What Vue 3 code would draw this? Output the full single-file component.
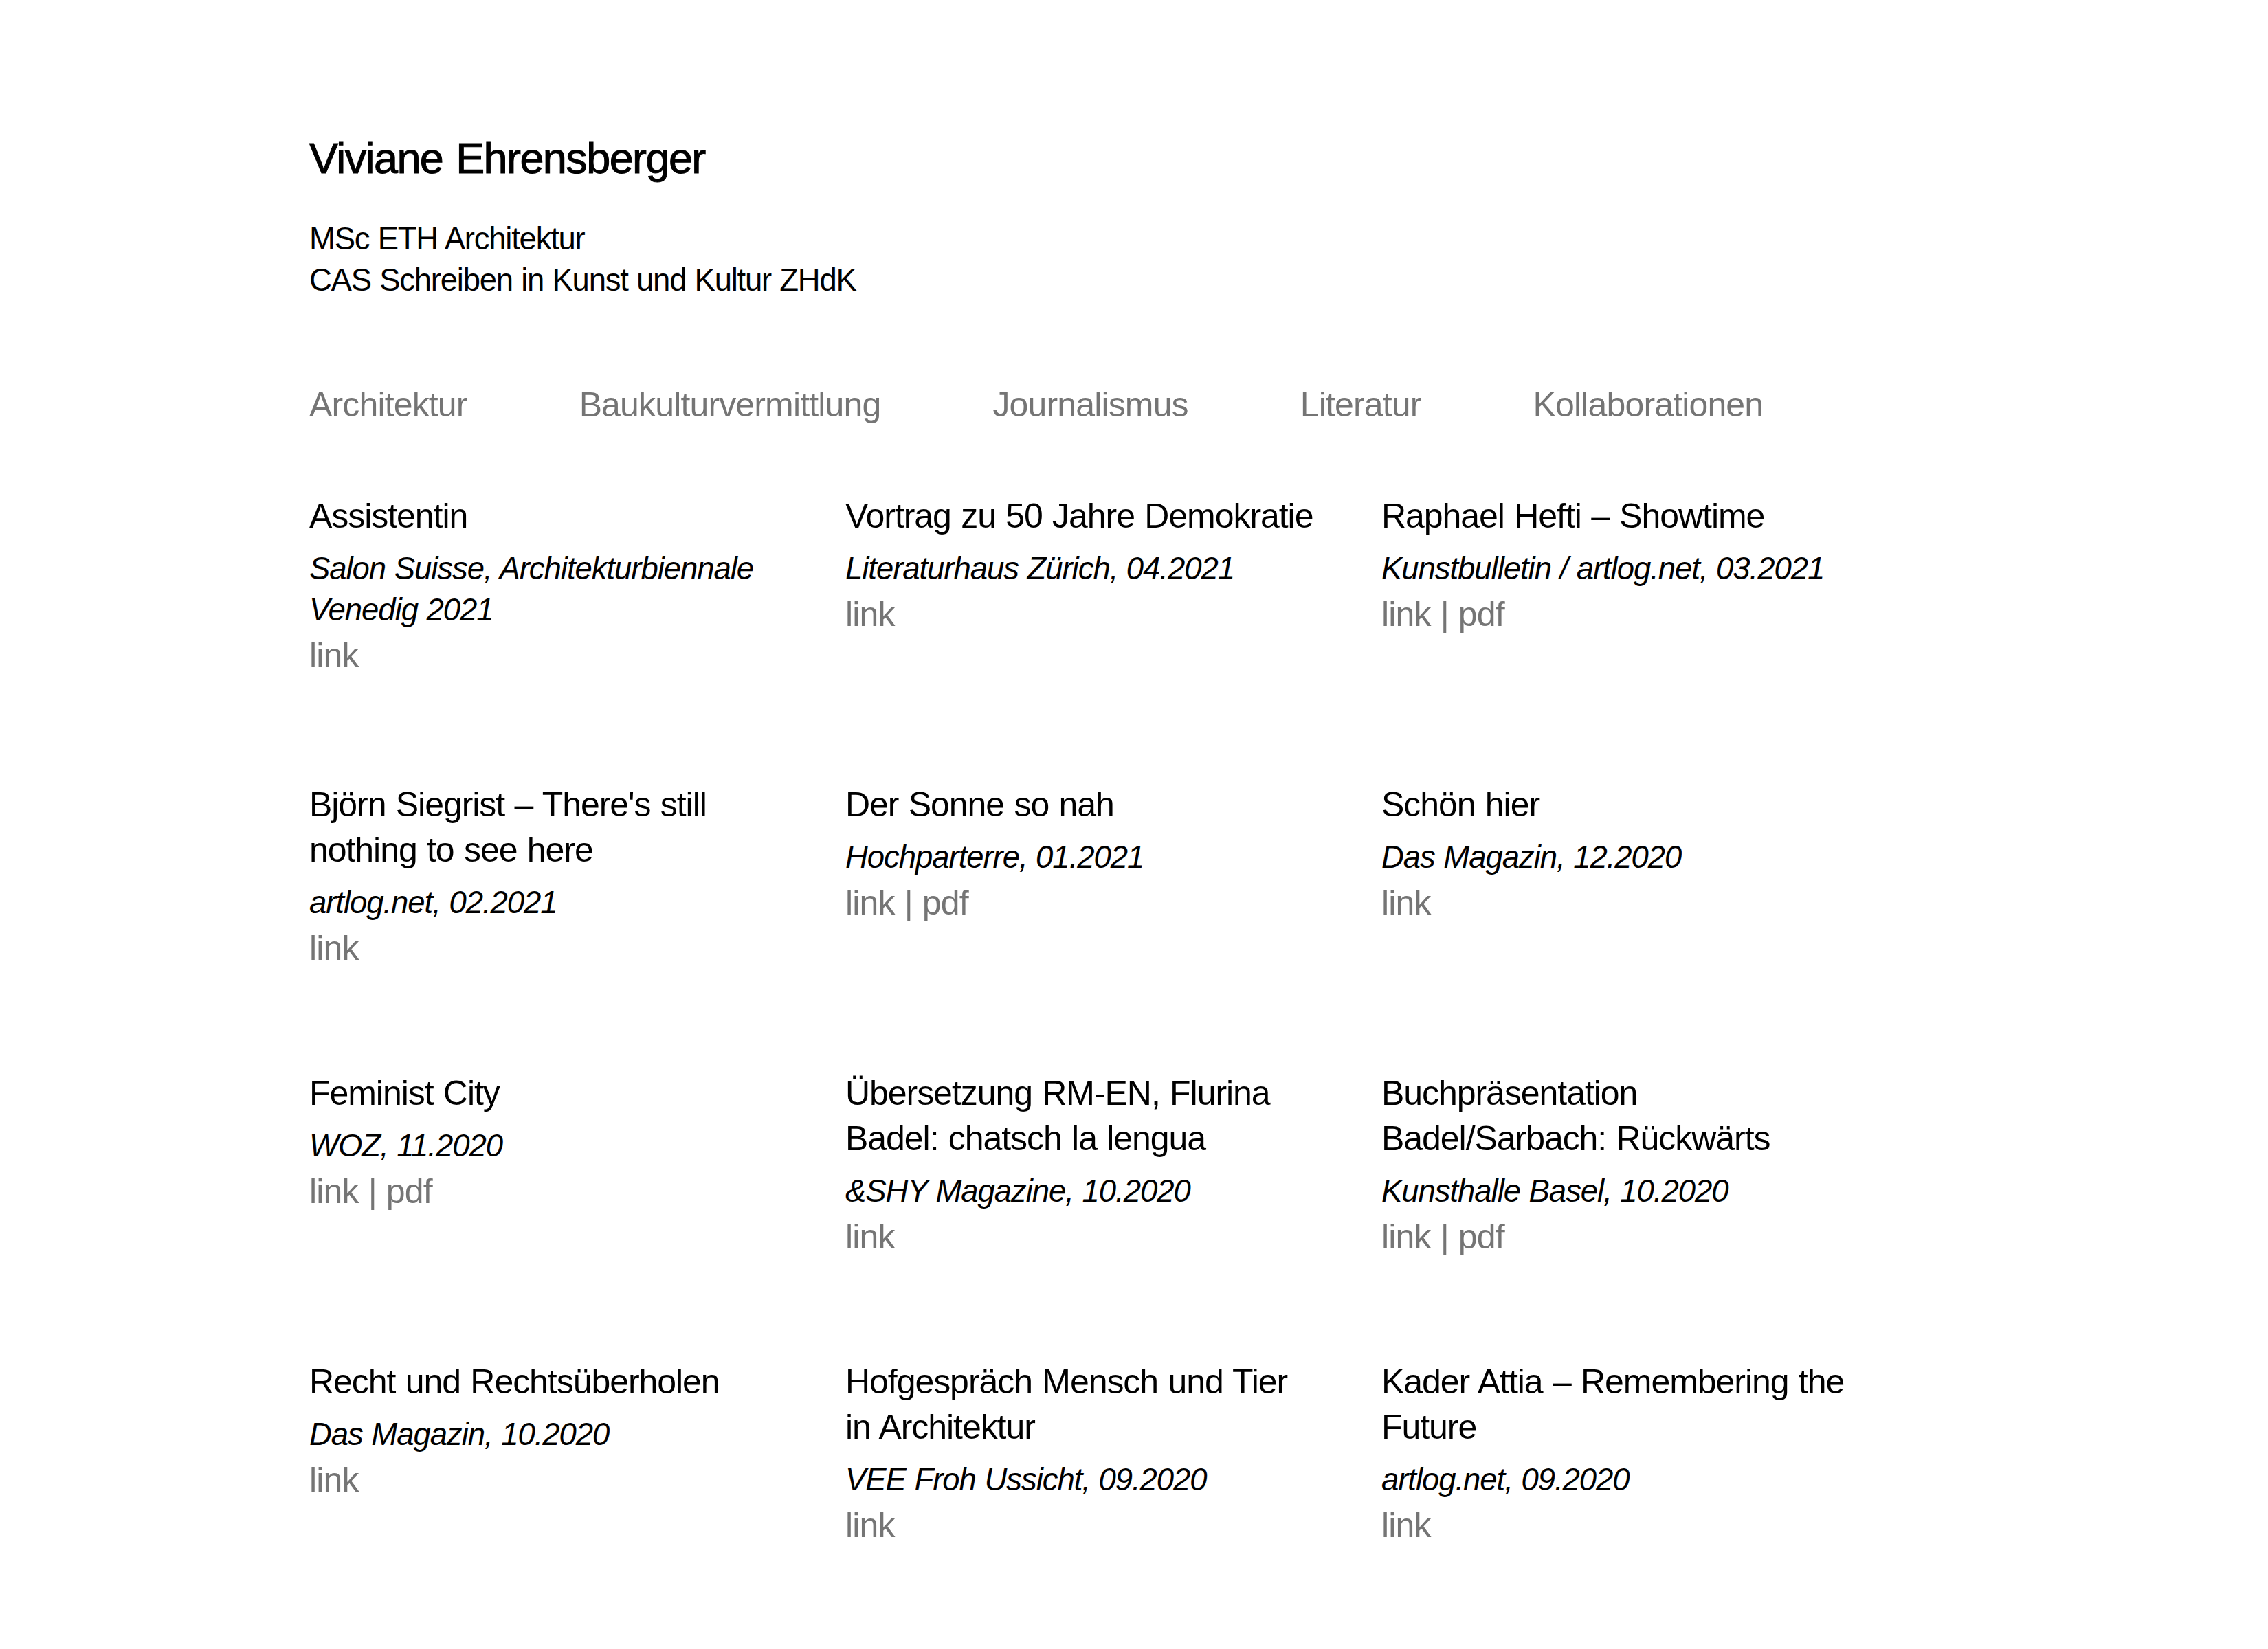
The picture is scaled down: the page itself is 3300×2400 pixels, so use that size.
<script setup>
const nav = [
  "Architektur",
  "Baukulturvermittlung",
  "Journalismus",
  "Literatur",
  "Kollaborationen",
];

const works = [
  {
    title: "Assistentin",
    info: "Salon Suisse, Architekturbiennale Venedig 2021",
    links: ["link"],
  },
  {
    title: "Vortrag zu 50 Jahre Demokratie",
    info: "Literaturhaus Zürich, 04.2021",
    links: ["link"],
  },
  {
    title: "Raphael Hefti – Showtime",
    info: "Kunstbulletin / artlog.net, 03.2021",
    links: ["link", "pdf"],
  },
  {
    title: "Björn Siegrist – There's still nothing to see here",
    info: "artlog.net, 02.2021",
    links: ["link"],
  },
  {
    title: "Der Sonne so nah",
    info: "Hochparterre, 01.2021",
    links: ["link", "pdf"],
  },
  {
    title: "Schön hier",
    info: "Das Magazin, 12.2020",
    links: ["link"],
  },
  {
    title: "Feminist City",
    info: "WOZ, 11.2020",
    links: ["link", "pdf"],
  },
  {
    title: "Übersetzung RM-EN, Flurina Badel: chatsch la lengua",
    info: "&SHY Magazine, 10.2020",
    links: ["link"],
  },
  {
    title: "Buchpräsentation Badel/Sarbach: Rückwärts",
    info: "Kunsthalle Basel, 10.2020",
    links: ["link", "pdf"],
  },
  {
    title: "Recht und Rechtsüberholen",
    info: "Das Magazin, 10.2020",
    links: ["link"],
  },
  {
    title: "Hofgespräch Mensch und Tier in Architektur",
    info: "VEE Froh Ussicht, 09.2020",
    links: ["link"],
  },
  {
    title: "Kader Attia – Remembering the Future",
    info: "artlog.net, 09.2020",
    links: ["link"],
  },
];
</script>

<template>
  <div class="page">
    <header>
      <h1>Viviane Ehrensberger</h1>
      <p class="about">
        MSc ETH Architektur<br />
        CAS Schreiben in Kunst und Kultur ZHdK
      </p>
    </header>

    <nav class="nav">
      <a v-for="item in nav" :key="item">{{ item }}</a>
    </nav>

    <main class="works">
      <article v-for="(work, index) in works" :key="index">
        <h2>{{ work.title }}</h2>
        <p class="info">{{ work.info }}</p>
        <p class="links">
          <template v-for="(link, i) in work.links" :key="link"
            ><span v-if="i > 0"> | </span><a>{{ link }}</a></template
          >
        </p>
      </article>
    </main>
  </div>
</template>

<style>
body {
  margin: 0;
  background: #fff;
}
</style>

<style scoped>
.page {
  box-sizing: border-box;
  height: 2400px;
  padding: 190px 450px 0;
  overflow: hidden;
  color: #000;
  font-family: "Liberation Sans", Arial, sans-serif;
}

h1,
h2,
p {
  margin: 0;
  font-weight: 400;
}

h1 {
  font-size: 63px;
  line-height: 80px;
  letter-spacing: -1.6px;
  word-spacing: 3px;
  -webkit-text-stroke: 1px #000;
}

.about {
  margin-top: 48px;
  font-size: 45.5px;
  line-height: 60px;
  letter-spacing: -1.25px;
  word-spacing: 1px;
}

.nav {
  display: flex;
  gap: 163px;
  margin-top: 118px;
}

.nav a,
.links,
h2 {
  font-size: 50px;
  line-height: 66px;
  letter-spacing: -0.85px;
}

h2 {
  letter-spacing: -1.05px;
  word-spacing: 1.5px;
}

.nav a,
.links {
  color: #757575;
}

.links {
  margin-top: 3px;
  word-spacing: 1px;
}

.works {
  display: grid;
  grid-template-columns: repeat(3, 690px);
  grid-auto-rows: 420px;
  column-gap: 90px;
  margin-top: 96px;
}

.info {
  margin-top: 14px;
  font-size: 45.5px;
  font-style: italic;
  line-height: 60px;
  letter-spacing: -1.05px;
  word-spacing: 1px;
}

a {
  cursor: pointer;
}
</style>
